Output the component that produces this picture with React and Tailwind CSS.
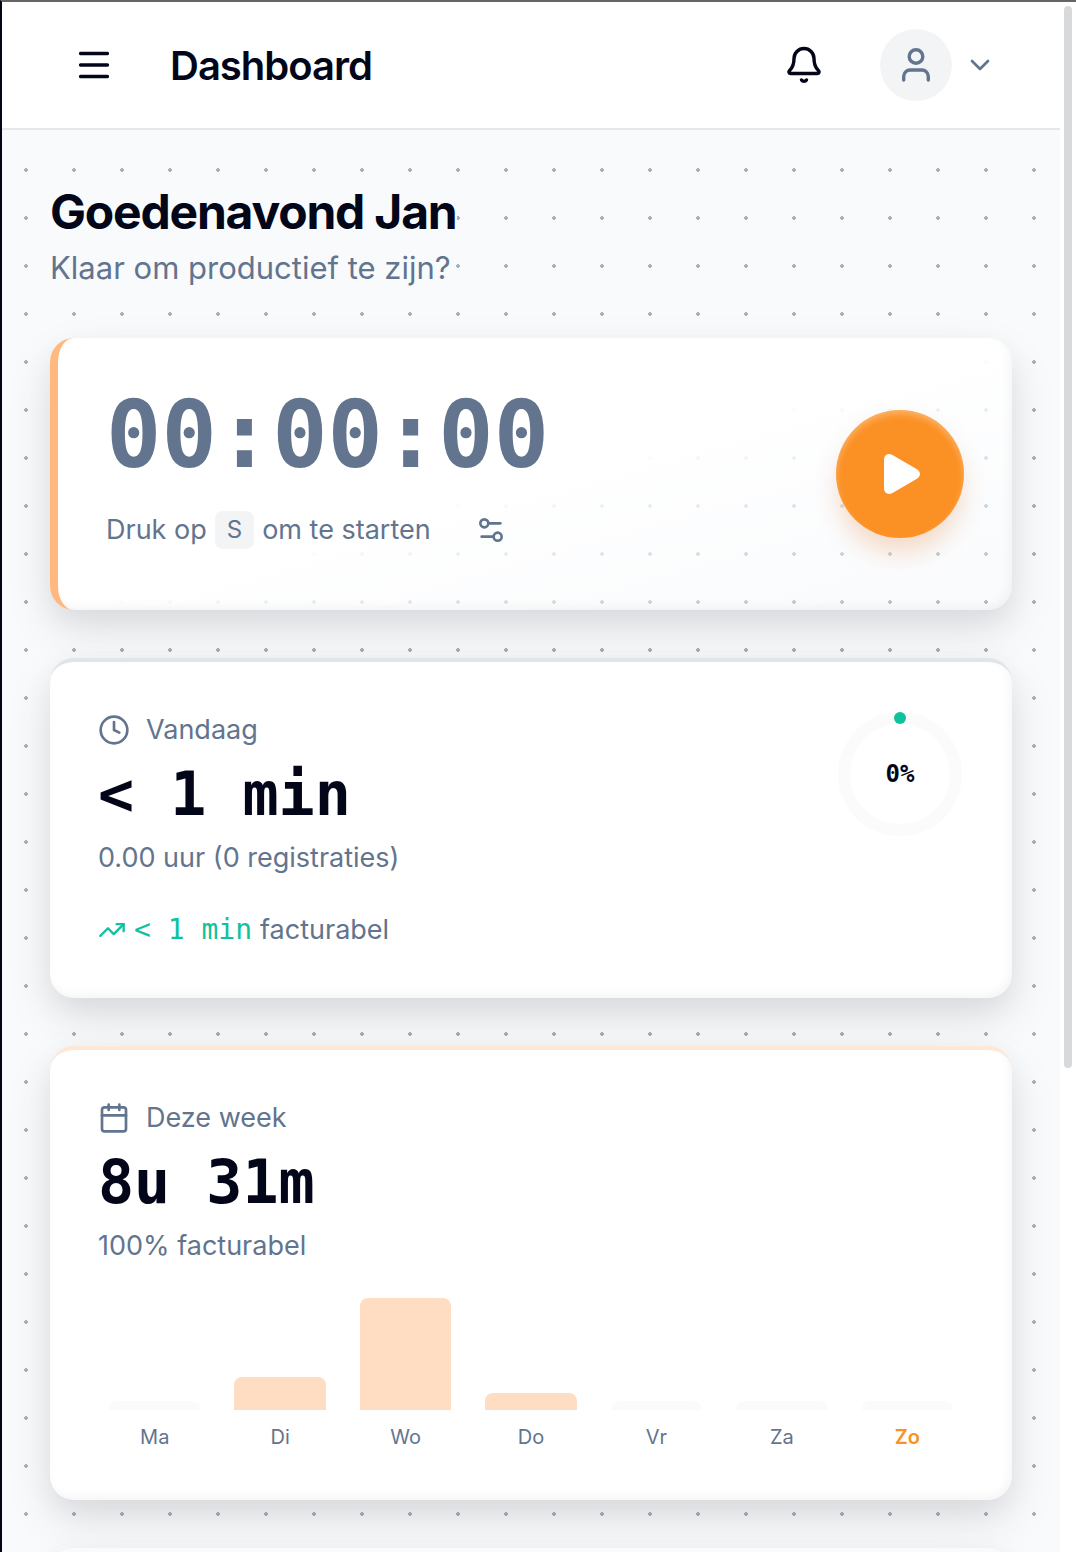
import React, { useState } from 'react';
import { Calendar, ChevronDown, Clock, Settings2, TrendingUp } from 'lucide-react';

const week = [
  { day: 'Ma', height: 9 },
  { day: 'Di', height: 33 },
  { day: 'Wo', height: 112 },
  { day: 'Do', height: 17 },
  { day: 'Vr', height: 9 },
  { day: 'Za', height: 9 },
  { day: 'Zo', height: 9, today: true },
];

const cardShadow =
  'shadow-[0_20px_50px_rgba(0,0,0,0.09),0_12px_28px_rgba(15,23,42,0.06),inset_-3px_-4px_8px_rgba(15,23,42,0.04)]';
const mono = "font-['DejaVu_Sans_Mono',monospace]";

function MenuIcon() {
  return (
    <svg width="32" height="32" viewBox="0 0 32 32" fill="none" stroke="currentColor" strokeWidth="3.3" strokeLinecap="round">
      <path d="M2.5 4.5h27M2.5 16h27M2.5 27.5h27" />
    </svg>
  );
}

function BellIcon() {
  return (
    <svg width="40" height="40" viewBox="0 0 40 40" fill="none" stroke="currentColor" strokeWidth="3.4" strokeLinecap="round" strokeLinejoin="round">
      <path d="M20 3.500a10 10 0 0 0-10 10c0 6-1 8.500-4 11.500-1.800 1.800-1.100 3.500.8 3.500h26.400c1.900 0 2.600-1.700.8-3.500-3-3-4-5.500-4-11.500a10 10 0 0 0-10-10z" />
      <path d="M17.500 35c1.200 1.700 3.800 1.700 5 0" />
    </svg>
  );
}

function UserIcon() {
  return (
    <svg width="36" height="36" viewBox="0 0 36 36" fill="none" stroke="currentColor" strokeWidth="3.4" strokeLinecap="round">
      <circle cx="18" cy="9.500" r="6.800" />
      <path d="M5.700 33v-3.500a6.500 6.500 0 0 1 6.500-6.500h11.600a6.500 6.500 0 0 1 6.500 6.500v3.500" />
    </svg>
  );
}

function Header() {
  return (
    <header className="flex h-32 shrink-0 items-center border-b-2 border-gray-200 bg-white px-16 text-slate-950">
      <button type="button" aria-label="Menu" className="flex size-14 items-center justify-center">
        <MenuIcon />
      </button>
      <h1 className="ml-12 pt-0.5 text-[40px] leading-12 font-semibold tracking-tight">Dashboard</h1>
      <div className="ml-auto flex items-center gap-10">
        <button type="button" aria-label="Meldingen" className="flex size-18 items-center justify-center">
          <BellIcon />
        </button>
        <button type="button" aria-label="Account" className="flex items-center gap-3 text-slate-500">
          <span className="flex size-18 items-center justify-center rounded-full bg-gray-100">
            <UserIcon />
          </span>
          <ChevronDown size={32} />
        </button>
      </div>
    </header>
  );
}

function TimerCard() {
  const [running, setRunning] = useState(false);

  return (
    <section className={`flex items-center justify-between rounded-3xl border-l-8 border-[#ffb980] bg-linear-to-br from-white from-50% to-white/10 bg-origin-border p-12 ${cardShadow}`}>
      <div className="text-slate-500">
        <p className={`text-[92px] leading-[100px] font-bold ${mono}`}>00:00:00</p>
        <div className="mt-3 flex h-16 items-center gap-7">
          <p className="flex items-center gap-2 text-[27px] leading-10">
            Druk op
            <kbd className="rounded-lg bg-gray-100 px-3 text-2xl leading-[38px] font-[Inter,sans-serif]">S</kbd>
            om te starten
          </p>
          <button type="button" aria-label="Instellingen" className="flex size-16 items-center justify-center">
            <Settings2 size={32} />
          </button>
        </div>
      </div>
      <button
        type="button"
        aria-label="Start timer"
        onClick={() => setRunning(!running)}
        className="flex size-32 items-center justify-center rounded-full bg-[#fb9125] text-white shadow-[0_18px_24px_-4px_rgba(255,160,90,0.3),0_10px_28px_rgba(100,116,139,0.07),inset_0_4px_6px_rgba(255,255,255,0.3)]"
      >
        <svg width="48" height="48" viewBox="0 0 48 48" fill="currentColor">
          <path d="M8 10c0-5 4-7.500 8.500-5l24 14c4.600 2.600 4.600 7.400 0 10l-24 14c-4.500 2.500-8.500 0-8.500-5z" />
        </svg>
      </button>
    </section>
  );
}

function ProgressRing({ percent }) {
  return (
    <div className="grid size-32 place-items-center">
      <svg className="col-start-1 row-start-1" width="128" height="128" viewBox="0 0 128 128" fill="none">
        <circle cx="64" cy="64" r="56" stroke="#fbfbfb" strokeWidth="12" />
        <circle cx="64" cy="8" r="6" fill="#10c1a0" />
      </svg>
      <span className={`col-start-1 row-start-1 text-2xl font-bold ${mono}`}>{percent}%</span>
    </div>
  );
}

function TodayCard() {
  return (
    <section className={`flex items-start justify-between rounded-3xl border-t-4 border-[#e1e5e8] bg-white p-12 text-slate-950 ${cardShadow}`}>
      <div>
        <h3 className="flex items-center gap-4 text-[27px] leading-10 text-slate-500">
          <Clock size={32} />
          Vandaag
        </h3>
        <p className={`mt-2 text-[60px] leading-18 font-bold ${mono}`}>&lt; 1 min</p>
        <p className="mt-2 text-[27px] leading-10 text-slate-500">0.00 uur (0 registraties)</p>
        <p className="mt-8 flex items-center gap-2 text-[27px] leading-10 text-slate-500">
          <TrendingUp size={28} className="text-[#10c1a0]" />
          <span className={`text-[28px] text-[#10c1a0] ${mono}`}>&lt; 1 min</span>
          facturabel
        </p>
      </div>
      <ProgressRing percent={0} />
    </section>
  );
}

function WeekCard() {
  return (
    <section className={`rounded-3xl border-t-4 border-[#ffe6d6] bg-white p-12 text-slate-950 ${cardShadow}`}>
      <h3 className="flex items-center gap-4 text-[27px] leading-10 text-slate-500">
        <Calendar size={32} />
        Deze week
      </h3>
      <p className={`mt-2 text-[60px] leading-18 font-bold ${mono}`}>8u 31m</p>
      <p className="mt-2 text-[27px] leading-10 text-slate-500">100% facturabel</p>
      <div className="-mx-1.5 mt-8 flex">
        {week.map((item) => (
          <div key={item.day} className="flex-1 px-[17px]">
            <div className="flex h-28 items-end">
              <div
                className={`w-full rounded-t-lg ${item.height > 9 ? 'bg-[#ffddc3]' : 'bg-[#fbfbfb]'}`}
                style={{ height: item.height }}
              />
            </div>
            <p className={`mt-3 text-center text-xl leading-[30px] ${item.today ? 'font-semibold text-[#fb9125]' : 'text-slate-500'}`}>
              {item.day}
            </p>
          </div>
        ))}
      </div>
    </section>
  );
}

function App() {
  return (
    <div className="flex h-screen overflow-hidden border-t-2 border-l-2 border-t-[#666467] border-l-[#020617] bg-white font-[Inter,sans-serif]">
      <div className="flex min-w-0 flex-1 flex-col overflow-hidden">
        <Header />
        <main className="flex-1 overflow-hidden bg-slate-50 bg-[radial-gradient(circle,#a6b1c0_2px,transparent_2px)] bg-size-[48px_48px] bg-position-[0_16px] p-12">
          <h2 className="w-fit bg-slate-50 text-5xl leading-17 font-bold tracking-tight text-slate-950">Goedenavond Jan</h2>
          <p className="w-fit bg-slate-50 text-[31px] leading-11 text-slate-500">Klaar om productief te zijn?</p>
          <div className="mt-12 flex flex-col gap-12">
            <TimerCard />
            <TodayCard />
            <WeekCard />
            <section className={`h-80 rounded-3xl border-t-4 border-gray-50 bg-white ${cardShadow}`} />
          </div>
        </main>
      </div>
      <div className="w-4 shrink-0 px-1 pt-1">
        <div className="h-[68.7%] rounded-full bg-[#d8d9db]" />
      </div>
    </div>
  );
}

export default App;
